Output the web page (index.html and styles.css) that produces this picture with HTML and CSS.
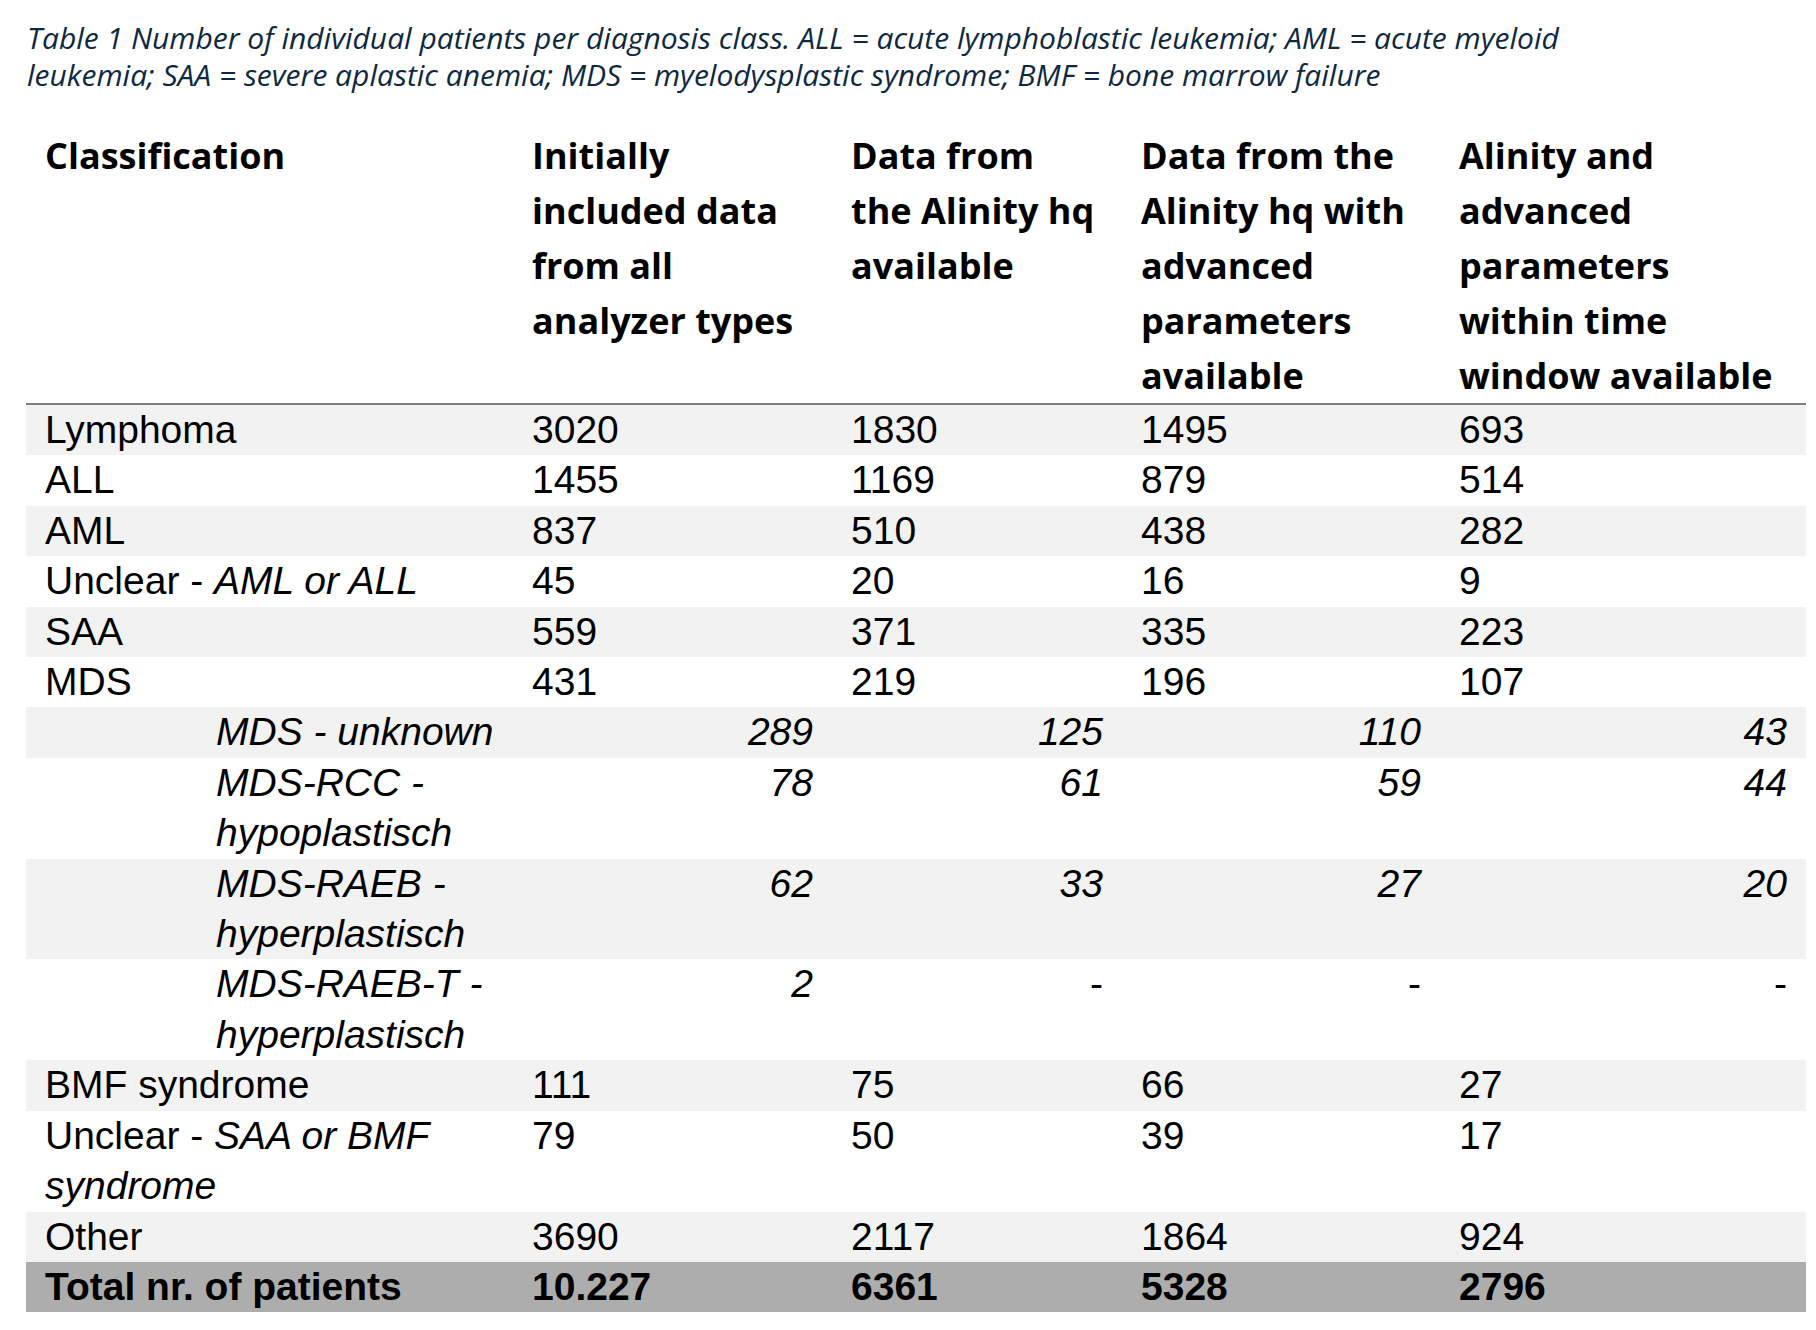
FILE: index.html
```html
<!DOCTYPE html>
<html lang="en">
<head>
<meta charset="utf-8">
<title>Table 1</title>
<link rel="stylesheet" href="styles.css">
</head>
<body>
<div class="page">
  <p class="caption">Table 1 Number of individual patients per diagnosis class. ALL = acute lymphoblastic leukemia; AML = acute myeloid<br>leukemia; SAA = severe aplastic anemia; MDS = myelodysplastic syndrome; BMF = bone marrow failure</p>
  <table class="data">
    <colgroup>
      <col class="c1"><col class="c2"><col class="c3"><col class="c4"><col class="c5">
    </colgroup>
    <thead>
      <tr>
        <th>Classification</th>
        <th>Initially<br>included data<br>from all<br>analyzer types</th>
        <th>Data from<br>the Alinity hq<br>available</th>
        <th>Data from the<br>Alinity hq with<br>advanced<br>parameters<br>available</th>
        <th>Alinity and<br>advanced<br>parameters<br>within time<br>window available</th>
      </tr>
    </thead>
    <tbody>
      <tr class="shade"><td>Lymphoma</td><td>3020</td><td>1830</td><td>1495</td><td>693</td></tr>
      <tr><td>ALL</td><td>1455</td><td>1169</td><td>879</td><td>514</td></tr>
      <tr class="shade"><td>AML</td><td>837</td><td>510</td><td>438</td><td>282</td></tr>
      <tr><td>Unclear - <i>AML or ALL</i></td><td>45</td><td>20</td><td>16</td><td>9</td></tr>
      <tr class="shade"><td>SAA</td><td>559</td><td>371</td><td>335</td><td>223</td></tr>
      <tr><td>MDS</td><td>431</td><td>219</td><td>196</td><td>107</td></tr>
      <tr class="shade sub"><td>MDS - unknown</td><td>289</td><td>125</td><td>110</td><td>43</td></tr>
      <tr class="sub"><td>MDS-RCC -<br>hypoplastisch</td><td>78</td><td>61</td><td>59</td><td>44</td></tr>
      <tr class="shade sub"><td>MDS-RAEB -<br>hyperplastisch</td><td>62</td><td>33</td><td>27</td><td>20</td></tr>
      <tr class="sub dash"><td>MDS-RAEB-T -<br>hyperplastisch</td><td>2</td><td>-</td><td>-</td><td>-</td></tr>
      <tr class="shade"><td>BMF syndrome</td><td>111</td><td>75</td><td>66</td><td>27</td></tr>
      <tr><td>Unclear - <i>SAA or BMF<br>syndrome</i></td><td>79</td><td>50</td><td>39</td><td>17</td></tr>
      <tr class="shade"><td>Other</td><td>3690</td><td>2117</td><td>1864</td><td>924</td></tr>
      <tr class="total"><td>Total nr. of patients</td><td>10.227</td><td>6361</td><td>5328</td><td>2796</td></tr>
    </tbody>
  </table>
</div>
</body>
</html>
```

FILE: styles.css
```css
html, body {
  margin: 0;
  padding: 0;
  background: #ffffff;
}

.page {
  padding: 19px 0 0 26px;
}

.caption {
  margin: 0 0 35px 1px;
  font-family: "Open Sans", "Noto Sans", sans-serif;
  font-style: italic;
  font-size: 30px;
  line-height: 37px;
  color: #0e2841;
  white-space: nowrap;
}

.data {
  border-collapse: collapse;
  table-layout: fixed;
  width: 1780px;
  font-family: "Liberation Sans", Arial, sans-serif;
  font-size: 39px;
  color: #000000;
}

.c1 { width: 487px; }
.c2 { width: 319px; }
.c3 { width: 290px; }
.c4 { width: 318px; }
.c5 { width: 366px; }

.data th {
  font-family: "Open Sans", "Lato", sans-serif;
  font-weight: 700;
  font-size: 36px;
  line-height: 55px;
  text-align: left;
  vertical-align: top;
  padding: 0 19px;
  white-space: nowrap;
  border-bottom: 2px solid #7f7f7f;
}

.data td {
  line-height: 50.4px;
  padding: 0 19px;
  vertical-align: top;
  text-align: left;
  white-space: nowrap;
}

.data tr.shade td {
  background: #f2f2f2;
}

.data tr.sub td {
  font-style: italic;
  text-align: right;
}

.data tr.sub td:first-child {
  text-align: left;
  padding-left: 190px;
}

.data tr.dash td {
  font-style: normal;
}

.data tr.dash td:first-child,
.data tr.dash td:nth-child(2) {
  font-style: italic;
}

.data tr.total td {
  background: #adadad;
  font-weight: 700;
}
```
